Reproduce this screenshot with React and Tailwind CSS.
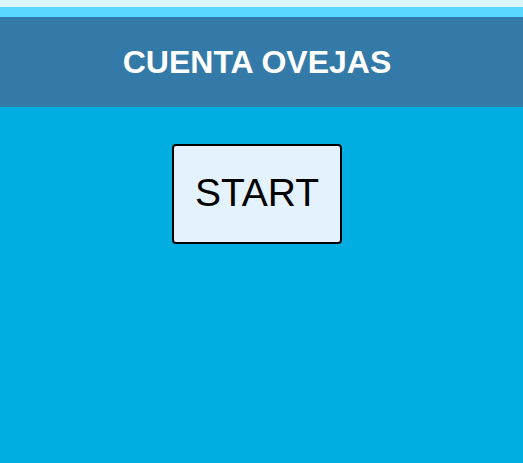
import React from 'react';

const App = () => {
  return (
    <div className="min-h-screen bg-[#00aee2] font-['Liberation_Sans',Arial,sans-serif]">
      {/* top strips */}
      <div className="h-[7px] bg-[#dbf6ff]" />
      <div className="h-[10px] bg-[#5bd8ff]" />

      {/* header */}
      <header className="h-[90px] bg-[#337aa8] flex items-center justify-center pr-[9px]">
        <h1 className="text-white font-bold text-[32px] leading-none">CUENTA OVEJAS</h1>
      </header>

      <main className="flex justify-center pt-[37px] pr-[9px]">
        <button
          type="button"
          className="w-[170px] h-[100px] pb-[3px] bg-[#e4f2fd] border-2 border-black rounded-[4px] text-black text-[39px] leading-none"
        >
          START
        </button>
      </main>
    </div>
  );
};

export default App;
